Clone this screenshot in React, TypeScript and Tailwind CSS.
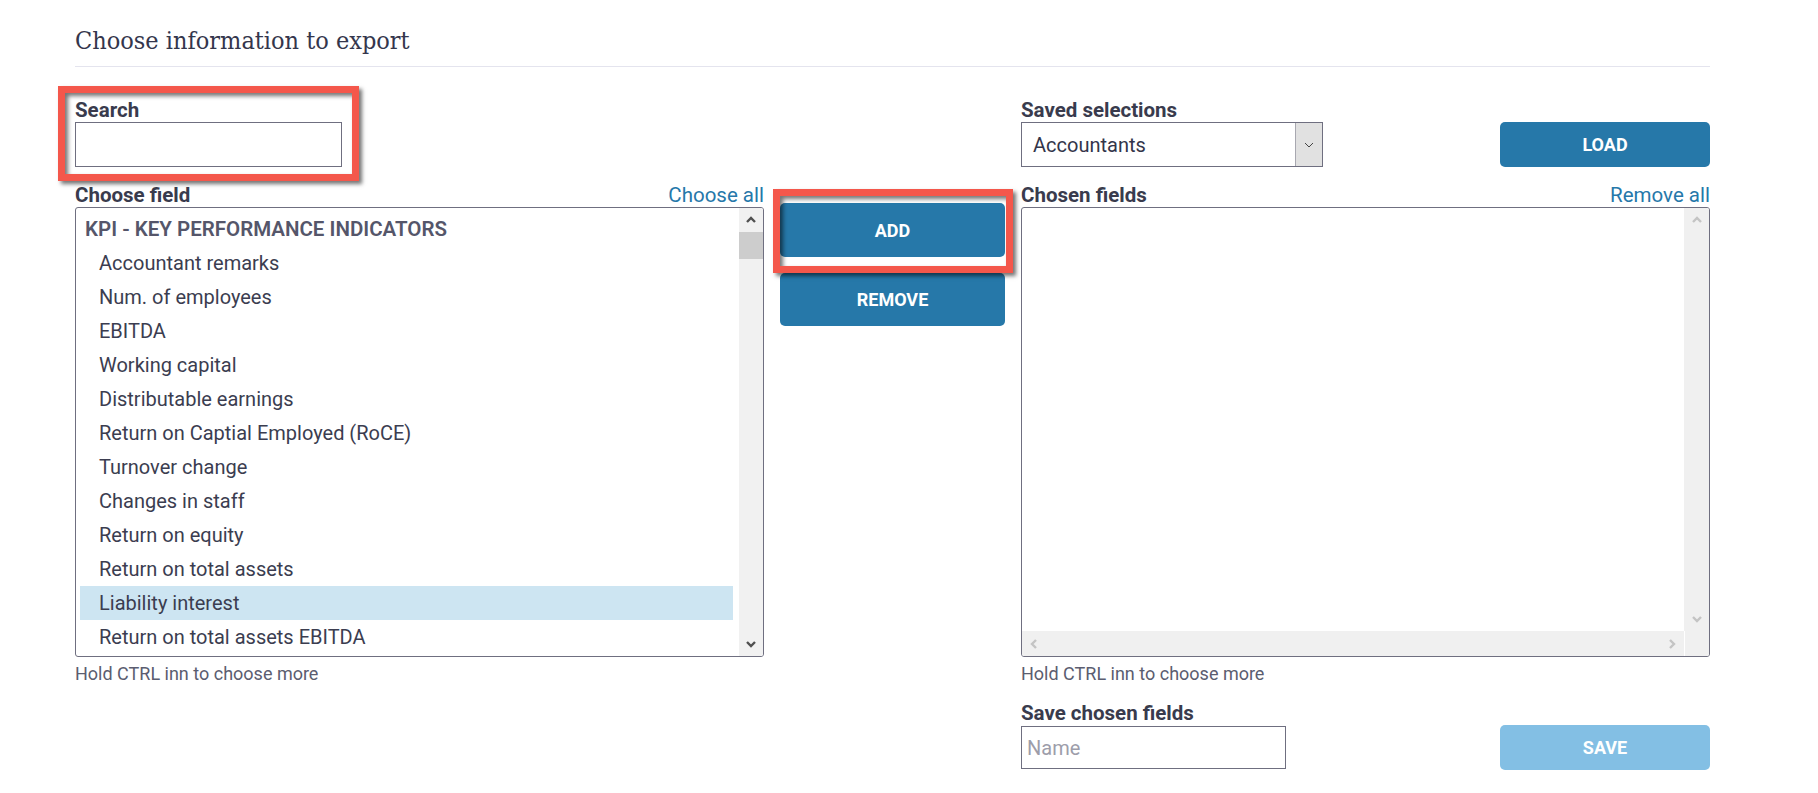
import React from "react";

type Dir = "up" | "down" | "left" | "right";

const arrowPaths: Record<Dir, string> = {
  up: "M2 8 L6 4 L10 8",
  down: "M2 4 L6 8 L10 4",
  left: "M8 2 L4 6 L8 10",
  right: "M4 2 L8 6 L4 10",
};

const Arrow = ({ dir, color }: { dir: Dir; color: string }) => (
  <svg width="12" height="12" viewBox="0 0 12 12" fill="none">
    <path d={arrowPaths[dir]} stroke={color} strokeWidth="2.4" />
  </svg>
);

const fields = [
  "Accountant remarks",
  "Num. of employees",
  "EBITDA",
  "Working capital",
  "Distributable earnings",
  "Return on Captial Employed (RoCE)",
  "Turnover change",
  "Changes in staff",
  "Return on equity",
  "Return on total assets",
  "Liability interest",
  "Return on total assets EBITDA",
];

const Label = ({ children }: { children: React.ReactNode }) => (
  <p className="text-[20.5px] leading-[24px] font-bold text-[#393b4d]">
    {children}
  </p>
);

const App = () => {
  return (
    <div className="relative min-h-screen bg-white font-['Roboto','Liberation_Sans',sans-serif] text-[#3b3d50]">
      <div className="ml-[75px] w-[1635px] pt-[24px]">
        <h2 className="font-['DejaVu_Serif_Condensed','DejaVu_Serif',serif] font-stretch-condensed text-[25px] leading-[33px] text-[#34364c]">
          Choose information to export
        </h2>
        <div className="mt-[9px] h-px bg-[#e4e4ee]" />

        {/* top row */}
        <div className="mt-[31px] grid grid-cols-[689px_225px_689px] gap-x-[16px]">
          <div>
            <Label>Search</Label>
            <input
              type="text"
              className="h-[45px] w-[267px] border border-[#6f6f80] bg-white px-2 text-[20px] outline-none"
            />
          </div>
          <div />
          <div className="flex items-end justify-between">
            <div>
              <Label>Saved selections</Label>
              <div className="flex h-[45px] w-[302px] border border-[#6f6f80] bg-white">
                <div className="flex flex-1 items-center pl-[11px] text-[20px] text-[#33354a]">
                  Accountants
                </div>
                <div className="flex w-[27px] items-center justify-center border-l border-[#a8a8b0] bg-[#e1e1e1]">
                  <svg width="10" height="6" viewBox="0 0 10 6" fill="none">
                    <path d="M1 1 L5 5 L9 1" stroke="#444" strokeWidth="1" />
                  </svg>
                </div>
              </div>
            </div>
            <button className="h-[45px] w-[210px] rounded-[5px] bg-[#2678a9] text-[18px] font-bold text-white">
              LOAD
            </button>
          </div>
        </div>

        {/* lists row */}
        <div className="mt-[16px] grid grid-cols-[689px_225px_689px] gap-x-[16px]">
          {/* left column */}
          <div>
            <div className="flex items-center justify-between">
              <Label>Choose field</Label>
              <a className="text-[20.5px] leading-[24px] text-[#2678aa]">Choose all</a>
            </div>
            <div className="flex h-[450px] overflow-hidden rounded-[3px] border border-[#6f6f80]">
              <div className="flex-1 overflow-hidden pt-[4px] pl-[4px] pr-[6px]">
                <div className="h-[34px] pl-[5px] text-[20.5px] leading-[34px] font-semibold text-[#55566a]">
                  KPI - KEY PERFORMANCE INDICATORS
                </div>
                {fields.map((f, i) => (
                  <div
                    key={i}
                    className={`h-[34px] pl-[19px] text-[20px] leading-[34px] text-[#3b3d50] ${
                      f === "Liability interest" ? "bg-[#cde5f2]" : ""
                    }`}
                  >
                    {f}
                  </div>
                ))}
              </div>
              <div className="flex w-[24px] flex-col bg-[#f1f1f1]">
                <div className="flex h-[24px] items-center justify-center">
                  <Arrow dir="up" color="#505050" />
                </div>
                <div className="h-[27px] bg-[#cdcdcd]" />
                <div className="flex-1" />
                <div className="flex h-[24px] items-center justify-center">
                  <Arrow dir="down" color="#505050" />
                </div>
              </div>
            </div>
            <p className="mt-[5px] text-[18px] leading-[24px] text-[#5b5d70]">
              Hold CTRL inn to choose more
            </p>
          </div>

          {/* middle column */}
          <div className="flex flex-col gap-[16px] pt-[20px]">
            <button className="h-[54px] w-full rounded-[5px] bg-[#2678a9] text-[18px] font-bold text-white">
              ADD
            </button>
            <button className="h-[53px] w-full rounded-[5px] bg-[#2678a9] text-[18px] font-bold text-white">
              REMOVE
            </button>
          </div>

          {/* right column */}
          <div>
            <div className="flex items-center justify-between">
              <Label>Chosen fields</Label>
              <a className="text-[20.5px] leading-[24px] text-[#2678aa]">Remove all</a>
            </div>
            <div className="flex h-[450px] flex-col overflow-hidden rounded-[3px] border border-[#6f6f80]">
              <div className="flex flex-1">
                <div className="flex-1" />
                <div className="flex w-[25px] flex-col bg-[#f0f0f0]">
                  <div className="flex h-[24px] items-center justify-center">
                    <Arrow dir="up" color="#c4c4c4" />
                  </div>
                  <div className="flex-1" />
                  <div className="flex h-[24px] items-center justify-center">
                    <Arrow dir="down" color="#c4c4c4" />
                  </div>
                </div>
              </div>
              <div className="flex h-[25px]">
                <div className="flex flex-1 items-center justify-between bg-[#f0f0f0] px-[6px]">
                  <Arrow dir="left" color="#c4c4c4" />
                  <Arrow dir="right" color="#c4c4c4" />
                </div>
                <div className="w-[25px] border-l border-white bg-[#f0f0f0]" />
              </div>
            </div>
            <p className="mt-[5px] text-[18px] leading-[24px] text-[#5b5d70]">
              Hold CTRL inn to choose more
            </p>
            <div className="mt-[15px]">
              <Label>Save chosen fields</Label>
              <div className="flex items-center justify-between">
                <input
                  type="text"
                  placeholder="Name"
                  className="h-[43px] w-[265px] border border-[#6f6f80] bg-white px-[5px] text-[20px] outline-none placeholder:text-[#9d9daa]"
                />
                <button className="h-[45px] w-[210px] rounded-[5px] bg-[#83bfe4] text-[18px] font-bold text-white">
                  SAVE
                </button>
              </div>
            </div>
          </div>
        </div>
      </div>

      {/* annotation frames */}
      <div className="pointer-events-none absolute left-[58px] top-[86px] h-[95px] w-[301px] border-[7px] border-[#f4574b] shadow-[3px_3px_4px_rgba(0,0,0,0.55),inset_3px_3px_4px_rgba(0,0,0,0.55)]" />
      <div className="pointer-events-none absolute left-[773px] top-[189px] h-[84px] w-[240px] border-[7px] border-[#f4574b] shadow-[3px_3px_4px_rgba(0,0,0,0.55),inset_3px_3px_4px_rgba(0,0,0,0.55)]" />
    </div>
  );
};

export default App;
